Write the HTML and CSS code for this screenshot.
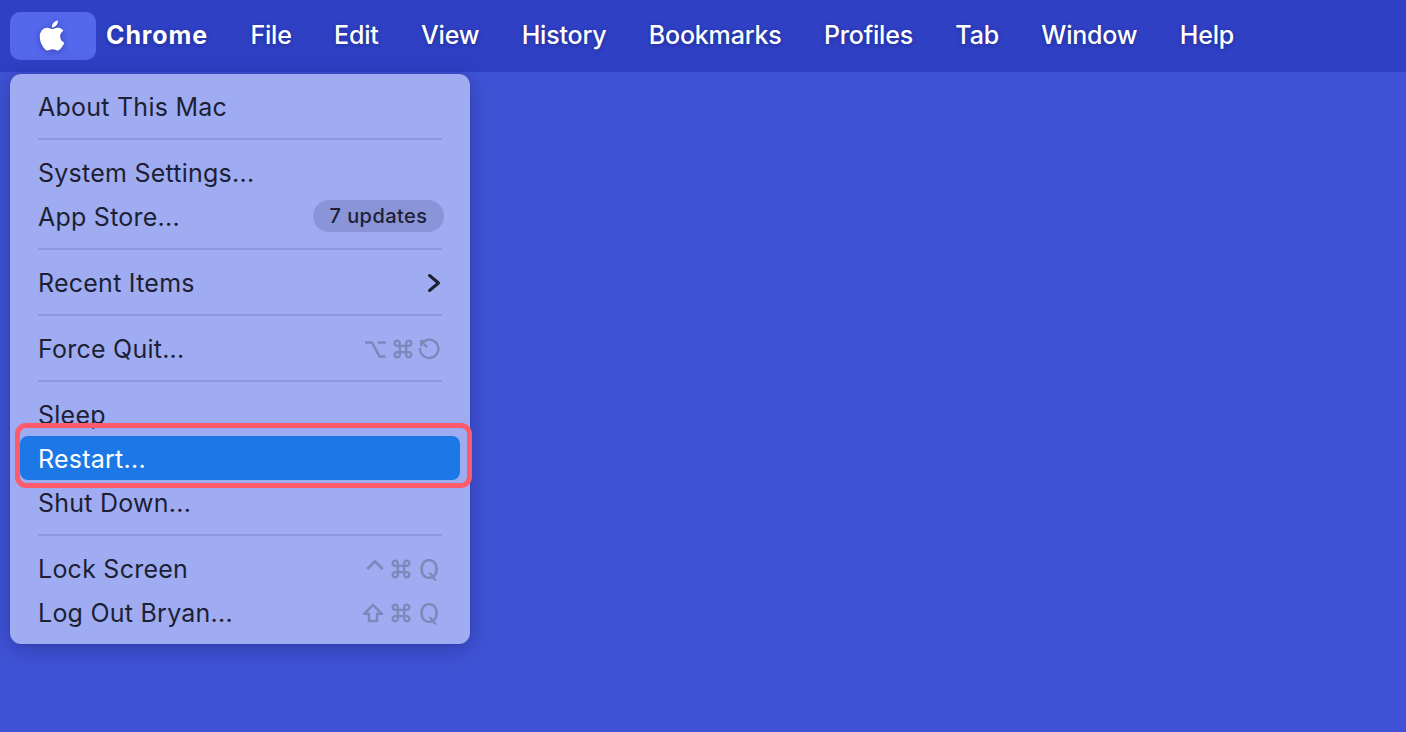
FILE: index.html
```html
<!DOCTYPE html>
<html lang="en">
<head>
<meta charset="utf-8">
<title>Apple menu</title>
<link rel="stylesheet" href="styles.css">
</head>
<body>
<svg class="defs" width="0" height="0" aria-hidden="true">
  <defs>
    <symbol id="cmd" viewBox="0 0 20 20">
      <path d="M6.8 6.8h6.4v6.4H6.8zM6.8 6.8H4.400a2.600 2.600 0 1 1 2.400-2.400zM13.200 6.800V4.400a2.600 2.600 0 1 1 2.400 2.400zM13.200 13.200h2.400a2.600 2.600 0 1 1-2.400 2.400zM6.800 13.200v2.400a2.600 2.600 0 1 1-2.400-2.400z" fill="none" stroke="currentColor" stroke-width="2.300"/>
    </symbol>
  </defs>
</svg>
<header class="menubar">
  <div class="apple">
    <svg class="apple-logo" viewBox="0 0 24 24" aria-hidden="true"><path fill="#fff" d="M12.152 6.896c-.948 0-2.415-1.078-3.96-1.04-2.04.027-3.91 1.183-4.961 3.014-2.117 3.675-.546 9.103 1.519 12.09 1.013 1.454 2.208 3.09 3.792 3.039 1.52-.065 2.09-.987 3.935-.987 1.831 0 2.35.987 3.96.948 1.637-.026 2.676-1.48 3.676-2.948 1.156-1.688 1.636-3.325 1.662-3.415-.039-.013-3.182-1.221-3.22-4.857-.026-3.04 2.48-4.494 2.597-4.559-1.429-2.09-3.623-2.324-4.39-2.376-2-.156-3.675 1.09-4.61 1.09zM15.53 3.83c.843-1.012 1.4-2.427 1.245-3.83-1.207.052-2.662.805-3.532 1.818-.78.896-1.454 2.338-1.273 3.714 1.338.104 2.715-.688 3.559-1.701"/></svg>
  </div>
  <nav class="menus">
    <span class="app">Chrome</span>
    <span>File</span>
    <span>Edit</span>
    <span>View</span>
    <span>History</span>
    <span>Bookmarks</span>
    <span>Profiles</span>
    <span>Tab</span>
    <span>Window</span>
    <span>Help</span>
  </nav>
</header>

<div class="menu">
  <div class="row">About This Mac</div>
  <div class="sep"></div>
  <div class="row">System Settings...</div>
  <div class="row">App Store...<span class="pill">7 updates</span></div>
  <div class="sep"></div>
  <div class="row">Recent Items
    <svg class="chev" viewBox="0 0 14 20" aria-hidden="true"><path d="M2.500 2.500 11.500 10l-9 7.500" fill="none" stroke="currentColor" stroke-width="3" stroke-linecap="round" stroke-linejoin="round"/></svg>
  </div>
  <div class="sep"></div>
  <div class="row">Force Quit...
    <span class="keys">
      <svg class="key-opt" viewBox="0 0 21 17" aria-hidden="true"><path d="M0 1.500h7l7.500 14h6M13 1.500h8" fill="none" stroke="currentColor" stroke-width="2.600"/></svg>
      <svg class="key-cmd"><use href="#cmd"/></svg>
      <svg class="key-power" viewBox="0 0 22 22" aria-hidden="true"><path d="M7.500 2.400A9.200 9.200 0 1 1 2 10M3.200 3.200l6 6M3.200 2.400v6M2.400 3.200h6" fill="none" stroke="currentColor" stroke-width="2.300"/></svg>
    </span>
  </div>
  <div class="sep"></div>
  <div class="row">Sleep</div>
  <div class="row active">Restart...</div>
  <div class="row">Shut Down...</div>
  <div class="sep"></div>
  <div class="row">Lock Screen
    <span class="keys">
      <svg class="key-ctrl" viewBox="0 0 20 12" aria-hidden="true"><path d="M1.500 10.500 10 2l8.500 8.500" fill="none" stroke="currentColor" stroke-width="3"/></svg>
      <svg class="key-cmd"><use href="#cmd"/></svg>
      <span class="key-q">Q</span>
    </span>
  </div>
  <div class="row">Log Out Bryan...
    <span class="keys">
      <svg class="key-shift" viewBox="0 0 22 20" aria-hidden="true"><path d="M11 1.800 20 10.800h-5V18H7v-7.200H2z" fill="none" stroke="currentColor" stroke-width="2.500" stroke-linejoin="round"/></svg>
      <svg class="key-cmd"><use href="#cmd"/></svg>
      <span class="key-q">Q</span>
    </span>
  </div>
  <div class="callout"></div>
</div>
</body>
</html>
```
FILE: styles.css
```css
* { box-sizing: border-box; }

html, body {
  margin: 0;
  height: 100%;
}

body {
  background: #4053d6;
  font-family: Inter, "Liberation Sans", sans-serif;
  overflow: hidden;
  position: relative;
}

.defs { position: absolute; }

.menubar {
  height: 72px;
  background: #2f40c5;
  display: flex;
  align-items: center;
  padding: 0 0 0 10px;
  color: #fff;
}

.apple {
  width: 86px;
  height: 48px;
  background: #5467ed;
  border-radius: 10px;
  display: flex;
  align-items: center;
  justify-content: center;
}

.apple-logo {
  width: 30px;
  height: 33px;
  margin-right: 3px;
  margin-top: -1px;
  filter: drop-shadow(0 1px 3px rgba(15, 20, 80, .4));
}

.menus {
  display: flex;
  gap: 42.4px;
  margin-left: 10px;
  margin-top: -3px;
  font-size: 25px;
  letter-spacing: -.2px;
  font-weight: 500;
  text-shadow: 0 1px 4px rgba(15, 20, 80, .45);
}

.menus .app {
  font-weight: 700;
  letter-spacing: .9px;
}

.menu {
  position: absolute;
  left: 10px;
  top: 74px;
  width: 460px;
  height: 570px;
  padding: 11px 10px 9px;
  background: #a0acf2;
  border-radius: 11px;
  box-shadow: 0 4px 22px rgba(25, 30, 110, .45), 0 0 1px rgba(25, 30, 110, .6);
  color: #1d1f33;
  font-size: 25px;
  letter-spacing: .24px;
}

.row {
  height: 44px;
  padding: 0 18px;
  display: flex;
  align-items: center;
  justify-content: space-between;
  white-space: nowrap;
}

.row.active {
  margin: -1px 0 1px;
  padding-top: 2px;
  background: #1c78e6;
  border-radius: 8px;
  color: #fff;
}

.sep {
  height: 2px;
  margin: 9px 18px 11px;
  background: #8d98dc;
}

.pill {
  width: 131px;
  height: 32px;
  margin: -2px -2px 0 0;
  border-radius: 16px;
  background: #8a95d9;
  display: flex;
  align-items: center;
  justify-content: center;
  font-size: 20px;
  font-weight: 500;
  letter-spacing: .45px;
}

.chev {
  width: 14px;
  height: 20px;
  margin-right: 1px;
}

.keys {
  display: flex;
  align-items: center;
  margin-right: 2px;
  color: #7c87ba;
}

.key-cmd { width: 20px; height: 20px; margin-left: 7px; }
.key-opt { width: 21px; height: 17px; }
.key-power { width: 22px; height: 22px; margin-left: 5px; }
.key-ctrl { width: 18px; height: 12px; margin-top: -8px; }
.key-shift { width: 22px; height: 20px; }
.key-q { width: 22px; margin-left: 7px; font-size: 27px; font-weight: 400; letter-spacing: 0; line-height: 1; text-align: center; }

.callout {
  position: absolute;
  left: 5px;
  top: 349px;
  width: 457px;
  height: 65px;
  border: 5px solid #fd5a6c;
  border-radius: 11px;
}
```
